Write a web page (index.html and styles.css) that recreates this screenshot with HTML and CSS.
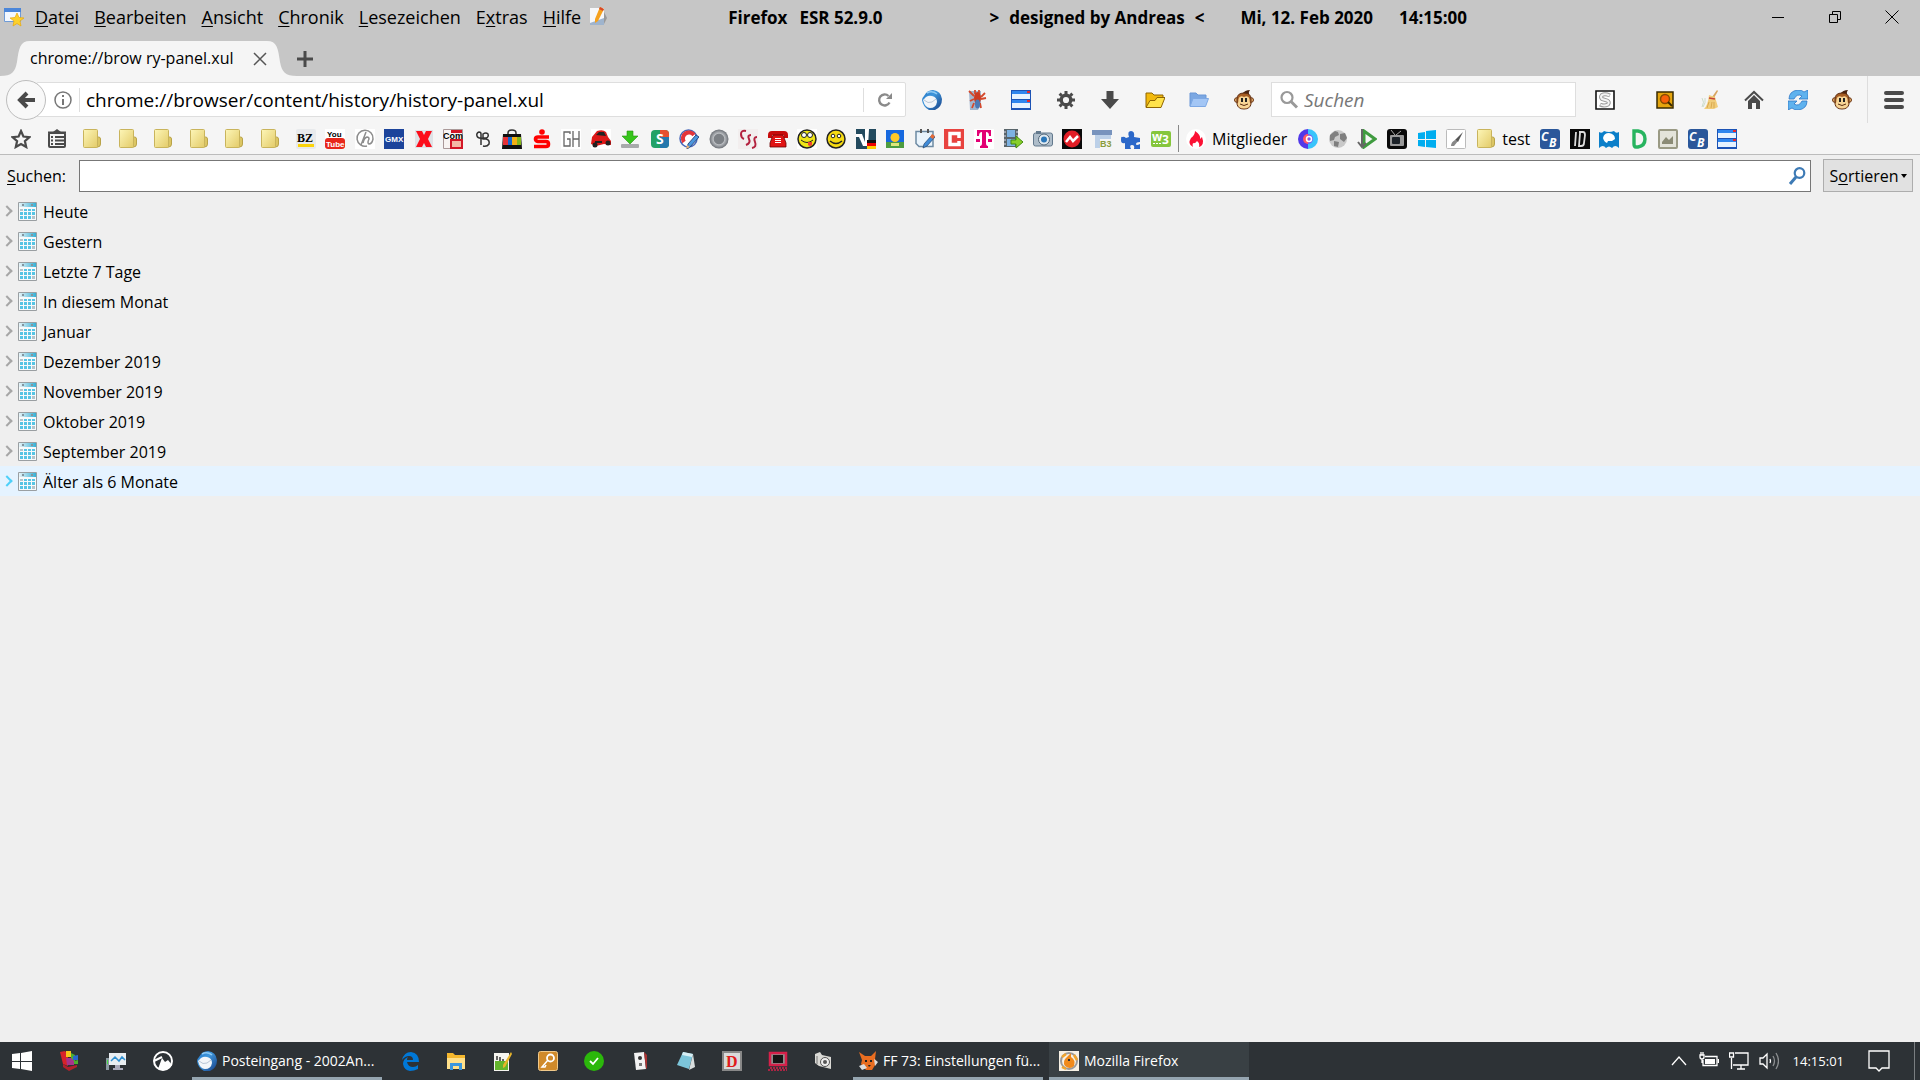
FILE: index.html
```html
<!DOCTYPE html>
<html lang="de">
<head>
    <meta charset="UTF-8">
    <title>Mozilla Firefox</title>
    <link rel="stylesheet" href="styles.css">
</head>
<body>
<svg class="defs">
    <defs>
        <linearGradient id="gFolder" x1="0" y1="0" x2="1" y2="1">
            <stop offset="0" stop-color="#fdf6b8"/>
            <stop offset="1" stop-color="#e3cb68"/>
        </linearGradient>
        <linearGradient id="gCal" x1="0" y1="0" x2="1" y2="0">
            <stop offset="0" stop-color="#e8f4f8"/>
            <stop offset="1" stop-color="#35b0d5"/>
        </linearGradient>
        <linearGradient id="gBird" x1="0" y1="0" x2="1" y2="1">
            <stop offset="0" stop-color="#1f6fc0"/>
            <stop offset=".4" stop-color="#3f97dc"/>
            <stop offset="1" stop-color="#173f86"/>
        </linearGradient>
        <radialGradient id="gGrey">
            <stop offset="0" stop-color="#7c8085"/>
            <stop offset=".5" stop-color="#7c8085"/>
            <stop offset=".6" stop-color="#b9bcc0"/>
            <stop offset="1" stop-color="#6b6f75"/>
        </radialGradient>
        <symbol id="folder" viewBox="0 0 20 20">
            <path d="M14 8h2.500q2 0 2 2v5q0 3-3 3h-3z" fill="#dcc664" stroke="#b9a349"/>
            <rect x="1.500" y=".5" width="14" height="18" rx="1" fill="url(#gFolder)" stroke="#c9b45c"/>
        </symbol>
        <symbol id="window" viewBox="0 0 20 20">
            <path d="M0 0h20v20H0z" fill="#1c53b5"/>
            <path d="M1 1h18v3H1zM1 10h18v3H1z" fill="#2f86ee"/>
            <path d="M1 4h18v5H1zM1 13h18v5H1z" fill="#e6f2ff"/>
            <path d="M16 1h3v2h-3zM16 10h3v2h-3z" fill="#e8262a"/>
        </symbol>
        <symbol id="cb" viewBox="0 0 20 20">
            <rect width="20" height="20" rx="3" fill="#2b579a"/>
            <text x="1" y="12" class="t-cb">C</text>
            <text x="9" y="18" class="t-cb">B</text>
        </symbol>
        <symbol id="monkey" viewBox="0 0 20 20">
            <path d="M8 4Q11 0 16 0q-2 2-1 5z" fill="#4a2410"/>
            <circle cx="2.800" cy="10" r="2.300" fill="#e5b06e" stroke="#6b3512"/>
            <circle cx="17.200" cy="10" r="2.300" fill="#e5b06e" stroke="#6b3512"/>
            <path d="M3 9Q3 3 10 3t7 6v5q-1 5-7 5t-7-5z" fill="#a75d22" stroke="#5d2d10"/>
            <path d="M4.500 9q1-4 5.500-2 4.500-2 5.500 2 0 3 1 5-1 4.500-6.500 4.500T3.500 14q1-2 1-5z" fill="#f7d596"/>
            <path d="M7 8h2v4H7zM11 8h2v4h-2z" fill="#222"/>
            <path d="M6 14q4 3 8 0" fill="none" stroke="#5d2d10"/>
        </symbol>
        <symbol id="calendar" viewBox="0 0 19 19">
            <path d="M.5.500h18v18H.5z" fill="#f7fafb" stroke="#9a9fa2"/>
            <path d="M1 1h17v4H1z" fill="url(#gCal)"/>
            <path d="M4 2h2v2H4zM13 2h2v2h-2z" fill="#84949c"/>
            <path d="M6 7h3v2H6zM10 7h3v2h-3zM14 7h3v2h-3zM2 10h3v3H2zM6 10h3v3H6zM10 10h3v3h-3zM14 10h3v3h-3zM2 14h3v3H2zM6 14h3v3H6zM10 14h3v3h-3z" fill="#56c4e4"/>
            <path d="M2 7h3v2H2zM14 14h3v3h-3z" fill="#b4c3ca"/>
        </symbol>
        <symbol id="thunderbird" viewBox="0 0 20 20">
            <path d="M2 6Q5 0 11 0q8 1 9 9 0 8-7 11H7Q1 17 0 10q0-2 2-4z" fill="url(#gBird)"/>
            <path d="M1 10l3-3q3-2 6-1 5 1 5 6-1 6-7 6-5 0-7-8z" fill="#f2f5f9"/>
            <path d="M2 10q4 4 8 2l4-3" fill="none" stroke="#b9c6d6"/>
            <path d="M5 3q5-3 10 1" fill="none" stroke="#8fcaf4" stroke-width="1.500"/>
        </symbol>
    </defs>
</svg>

<header class="titlebar">
    <svg class="app-icon" viewBox="0 0 20 20">
        <path d="M.5 1.500h16v13H.5z" fill="#f3f8ff" stroke="#6f9bd6"/>
        <path d="M0 1h17v4H0z" fill="#4b86d9"/>
        <path d="M13 6l2 4.500 5 .5-4 3 1 5-4-2.500L9 19l1-5-4-3 5-.5z" fill="#fcd12c" stroke="#e8a80c" stroke-width=".7"/>
    </svg>
    <nav class="menu">
        <button><u>D</u>atei</button>
        <button><u>B</u>earbeiten</button>
        <button><u>A</u>nsicht</button>
        <button><u>C</u>hronik</button>
        <button><u>L</u>esezeichen</button>
        <button>E<u>x</u>tras</button>
        <button><u>H</u>ilfe</button>
    </nav>
    <svg class="icon" viewBox="0 0 20 20">
        <path d="M1 1h14v17H1z" fill="#f7f8fa"/>
        <path d="M1 16l14-5v7H1z" fill="#9fb4cd"/>
        <path d="M15 5l3 6-3 6z" fill="#999"/>
        <path d="M11 0l4 2-6 12-3 2v-4z" fill="#f5a11d"/>
        <path d="M11 0l4 2-1 2-4-2z" fill="#d8482a"/>
    </svg>
    <div class="title">
        <span>Firefox</span>
        <span class="version">ESR 52.9.0</span>
        <span class="design"><span>&gt;</span><span>designed by Andreas</span><span>&lt;</span></span>
        <span class="date">Mi, 12. Feb 2020</span>
        <span class="time">14:15:00</span>
    </div>
    <div class="controls">
        <button aria-label="Minimieren"><svg viewBox="0 0 14 14"><path d="M1 7.500h12"/></svg></button>
        <button aria-label="Verkleinern"><svg viewBox="0 0 14 14"><path d="M1.500 4.500h8v8h-8zM4.500 4.500v-3h8v8h-3"/></svg></button>
        <button aria-label="Schließen"><svg viewBox="0 0 14 14"><path d="M.5.500l13 13M13.500.500l-13 13"/></svg></button>
    </div>
</header>

<div class="tabs">
    <div class="tab">
        <svg class="tab-edge" viewBox="0 0 30 35"><path d="M0 35C12 35 15 31 17 21 19 7 20 0 30 0V35z"/></svg>
        <span class="tab-label">chrome://brow ry-panel.xul</span>
        <button class="tab-close" aria-label="Tab schließen"><svg viewBox="0 0 14 14"><path d="M1 1l12 12M13 1L1 13"/></svg></button>
        <svg class="tab-edge" viewBox="0 0 30 35"><path d="M30 35C18 35 15 31 13 21 11 7 10 0 0 0V35z"/></svg>
    </div>
    <button class="new-tab" aria-label="Neuer Tab"><svg viewBox="0 0 16 16"><path d="M8 0v16M0 8h16"/></svg></button>
</div>

<div class="navbar">
    <button class="back" aria-label="Zurück"><svg viewBox="0 0 20 20"><path d="M19 10H5M11 3l-7 7 7 7" fill="none" stroke="#4a4a4a" stroke-width="4"/></svg></button>
    <div class="urlbar">
        <svg class="info" viewBox="0 0 20 20"><circle cx="10" cy="10" r="8" fill="none" stroke="#777" stroke-width="1.500"/><path d="M9 5h2v2H9zM9 9h2v6H9z" fill="#777"/></svg>
        <input type="text" aria-label="Adresse" value="chrome://browser/content/history/history-panel.xul">
        <button class="reload" aria-label="Neu laden"><svg viewBox="0 0 20 20"><path d="M14.500 12.500A5.500 5.500 0 1 1 13.500 6" fill="none" stroke="#8a8a8a" stroke-width="2.400"/><path d="M17 3v6h-6z" fill="#8a8a8a"/></svg></button>
    </div>
    <div class="tools">
        <button aria-label="Thunderbird"><svg class="icon"><use href="#thunderbird"/></svg></button>
        <button aria-label="Bug"><svg class="icon" viewBox="0 0 20 20">
            <path d="M2 1h12v13l-3 6H3z" fill="#a3b6cf"/>
            <path d="M2 1l5 5M18 3l-4 4M3 11l4-2M19 8l-5 1M5 18l2-5M14 18l-1-5M8 0v4M12 0v4" stroke="#d4492c" stroke-width="1.800"/>
            <ellipse cx="10.500" cy="8" rx="3.500" ry="6" fill="#cc3a22"/>
            <ellipse cx="10.500" cy="14" rx="2.500" ry="4.500" fill="#4d78b4"/>
        </svg></button>
        <button aria-label="Fenster"><svg class="icon"><use href="#window"/></svg></button>
        <button aria-label="Einstellungen"><svg class="icon" viewBox="0 0 20 20">
            <circle cx="10" cy="10" r="4.800" fill="none" stroke="#4a4a4a" stroke-width="3.400"/>
            <path d="M10 1v3M10 16v3M1 10h3M16 10h3M3.600 3.600l2.200 2.200M14.200 14.200l2.200 2.200M3.600 16.400l2.200-2.200M14.200 5.800l2.200-2.200" stroke="#4a4a4a" stroke-width="3"/>
        </svg></button>
        <button aria-label="Downloads"><svg class="icon" viewBox="0 0 20 20"><path d="M6.500 1h7v8H19l-9 10L1 9h5.500z" fill="#4a4a4a"/></svg></button>
        <button aria-label="Ordner öffnen"><svg class="icon" viewBox="0 0 20 20">
            <path d="M1 17V3h6l2 2h9v3" fill="#f2b90c" stroke="#8f6500"/>
            <path d="M1 17.500l4-7h5l2-3h8l-4 10z" fill="#ffe24a" stroke="#8f6500"/>
        </svg></button>
        <button aria-label="Profilordner"><svg class="icon" viewBox="0 0 20 20">
            <path d="M1 16V3h6l2 2h8v4" fill="#7ba7e2" stroke="#6a97d6"/>
            <path d="M1 16.500l3-8h15.500l-3 8z" fill="#a3c6f5" stroke="#7da8e4"/>
        </svg></button>
        <button aria-label="Greasemonkey"><svg class="icon"><use href="#monkey"/></svg></button>
    </div>
    <div class="searchbar">
        <svg class="icon" viewBox="0 0 20 20"><circle cx="8" cy="7.500" r="5.500" fill="none" stroke="#999" stroke-width="2.200"/><path d="M12 11.500l6 6" stroke="#999" stroke-width="3"/></svg>
        <input type="text" placeholder="Suchen" aria-label="Suchen">
    </div>
    <button class="stylish" aria-label="Stylish"><svg class="icon" viewBox="0 0 20 20">
        <path d="M1 1h18v18H1z" fill="#fff" stroke="#111" stroke-width="1.600"/>
        <path d="M15 5.500Q10 3.500 7 5q-2 2 0 4l5 1.500q3 1.500 1 4-4 2-8 0" fill="none" stroke="#999" stroke-width="4"/>
        <path d="M14.500 5.500Q10 3.500 7 5q-2 2 0 4l5 1.500q3 1.500 1 4-4 2-7.500 0" fill="none" stroke="#f4f4f4" stroke-width="2"/>
    </svg></button>
    <div class="tools-right">
        <button aria-label="Lupe"><svg class="icon" viewBox="0 0 20 20"><path d="M2 2h16v16H2z" fill="#e5a50d" stroke="#3a2b00" stroke-width="1.500"/><circle cx="10" cy="9" r="4.500" fill="#f9600a" stroke="#8a4b00" stroke-width="1.500"/><path d="M13 12l4 4" stroke="#3a2b00" stroke-width="2"/></svg></button>
        <button aria-label="Aufräumen"><svg class="icon" viewBox="0 0 20 20"><path d="M18 0l1 1-4 7-2-1z" fill="#d8a560"/><path d="M10 5l6 2 3 10-4 2H5q4-4 5-14z" fill="#f1cd7b"/><path d="M10 8l6 1" stroke="#c84536" stroke-width="1.500"/><path d="M10 12l-2 6M13 12l-1 6M15 12v6" stroke="#d9a94f"/><path d="M3 8q3 4 0 9M6 8q1 5-2 9" fill="none" stroke="#ccdccc"/></svg></button>
        <button aria-label="Startseite"><svg class="icon" viewBox="0 0 20 20"><path d="M1 10.500L10 2l9 8.500" fill="none" stroke="#4a4a4a" stroke-width="2"/><path d="M4 11l6-6 6 6v8h-4v-6H8v6H4z" fill="#4a4a4a"/></svg></button>
        <button aria-label="Neu starten"><svg class="icon" viewBox="0 0 20 20"><path d="M1 9Q1 1 10 0q4 0 6 2l4-2v9h-9l3-3q-5-3-8 3z" fill="#5fb2ee" stroke="#2b76c6" stroke-width=".8"/><path d="M19 11q0 8-9 9-4 0-6-2l-4 2v-9h9l-3 3q5 3 8-3z" fill="#5fb2ee" stroke="#2b76c6" stroke-width=".8"/></svg></button>
        <button aria-label="Scriptish"><svg class="icon"><use href="#monkey"/></svg></button>
    </div>
    <button class="hamburger" aria-label="Menü"><svg class="icon" viewBox="0 0 20 20"><path d="M2 3h16M2 10h16M2 17h16" stroke="#4a4a4a" stroke-width="4" stroke-linecap="round"/></svg></button>
</div>

<nav class="bookmarks">
    <div class="folders">
        <a href="#"><svg class="icon" viewBox="0 0 20 20"><path d="M10 2l2.400 5.500 6 .6-4.500 4 1.300 5.900L10 15l-5.200 3 1.300-5.900-4.500-4 6-.6z" fill="none" stroke="#4a4a4a" stroke-width="2.200"/></svg></a>
        <a href="#"><svg class="icon" viewBox="0 0 20 20"><path d="M6 3l4-3 4 3z" fill="#4a4a4a"/><rect x="2" y="4" width="16" height="14" rx="1" fill="none" stroke="#4a4a4a" stroke-width="2"/><path d="M4 8h2M8 8h9M4 11.500h2M8 11.500h9M4 15h2M8 15h9M1 3.500h18" stroke="#4a4a4a" stroke-width="1.800"/></svg></a>
        <a href="#"><svg class="icon"><use href="#folder"/></svg></a>
        <a href="#"><svg class="icon"><use href="#folder"/></svg></a>
        <a href="#"><svg class="icon"><use href="#folder"/></svg></a>
        <a href="#"><svg class="icon"><use href="#folder"/></svg></a>
        <a href="#"><svg class="icon"><use href="#folder"/></svg></a>
        <a href="#"><svg class="icon"><use href="#folder"/></svg></a>
    </div>
    <div class="sites">
        <a href="#"><svg class="icon" viewBox="0 0 20 20"><rect width="20" height="20" rx="2" fill="#e8eaec"/><text x="1" y="13" class="t-bz">BZ</text><path d="M2 15h16v3H2z" fill="#fbd40b"/></svg></a>
        <a href="#"><svg class="icon" viewBox="0 0 20 20"><path d="M0 0h20v20H0z" fill="#fff"/><text x="2" y="8" class="t-yt">You</text><rect y="9" width="20" height="11" rx="3" fill="#e8271b"/><text x="1" y="18" class="t-yt white">Tube</text></svg></a>
        <a href="#"><svg class="icon" viewBox="0 0 20 20"><path d="M0 0h20v20H0z" fill="#fff"/><path d="M12 17A8 8 0 1 1 18 10q-1 5-4 5-2-1 0-5 0-2-2-2-3 1-4 6M11 3L6 16" fill="none" stroke="#8d8d8d" stroke-width="1.500"/></svg></a>
        <a href="#"><svg class="icon" viewBox="0 0 20 20"><path d="M0 0h20v20H0z" fill="#1c449b"/><text x="1" y="13" class="t-gmx">GMX</text></svg></a>
        <a href="#"><svg class="icon" viewBox="0 0 20 20"><path d="M1 1h18v18H1z" fill="#dfe2e6"/><path d="M2 2h6l2 4 2-4h6l-4 8 4 8h-6l-2-4-2 4H2l4-8z" fill="#fc0d1b"/></svg></a>
        <a href="#"><svg class="icon" viewBox="0 0 20 20"><path d="M.5.500h19v19H.5z" fill="#f8f4f2" stroke="#a99"/><path d="M8 1h11v3H8z" fill="#d31626"/><path d="M8 11h11v8H8z" fill="#f4b9a5" stroke="#d31626" stroke-width="2"/><text x="0" y="10" class="t-com">Com</text></svg></a>
        <a href="#"><svg class="icon" viewBox="0 0 20 20"><path d="M8 16V5q0-2-2-2-3 1-2 4 1 3 6 2h3q3-1 2-4-2-2-5 0v5h3q4 1 3 5-2 3-6 2" fill="none" stroke="#333" stroke-width="1.500"/></svg></a>
        <a href="#"><svg class="icon" viewBox="0 0 20 20"><path d="M6 6V4q0-3 4-3t4 3v2" fill="none" stroke="#333" stroke-width="1.500"/><path d="M1 5h18l1 15H0z" fill="#111"/><path d="M1 8h5v8H1z" fill="#e43137"/><path d="M6 8h4v8H6z" fill="#1466d1"/><path d="M10 8h5v8h-5z" fill="#f4af13"/><path d="M15 8h4v8h-4z" fill="#84b71a"/></svg></a>
        <a href="#"><svg class="icon" viewBox="0 0 20 20"><circle cx="10" cy="3" r="2.800" fill="#f00"/><path d="M17 8H6q-2.500 0-2.500 2T6 12.500h8q2.500 0 2.500 2.500T14 17.500H2" fill="none" stroke="#f00" stroke-width="3.600"/></svg></a>
        <a href="#"><svg class="icon" viewBox="0 0 20 20"><path d="M0 0h20v20H0z" fill="#fff"/><path d="M9 5V3H3v14h6v-7H6M12 2v16M18 2v16M12 10h6" fill="none" stroke="#666" stroke-width="1.300"/></svg></a>
        <a href="#"><svg class="icon" viewBox="0 0 20 20"><path d="M0 0h20v20H0z" fill="#fff"/><path d="M1 8l5-6q6-2 9 1l2 5 3 4v4l-7-1-8 2-5-2z" fill="#dd1818"/><path d="M5 6l3-3h5l2 4zM4 12h7v2H4z" fill="#222"/><circle cx="4" cy="16" r="2.500" fill="#222"/><circle cx="17" cy="14" r="2.500" fill="#222"/></svg></a>
        <a href="#"><svg class="icon" viewBox="0 0 20 20"><rect x="1" y="15" width="18" height="4" rx="1" fill="#a8aaab"/><path d="M7 2h6v5h5l-8 8-8-8h5z" fill="#37c51c" stroke="#259012" stroke-width=".6"/></svg></a>
        <a href="#"><svg class="icon" viewBox="0 0 20 20"><rect x="1" y="1" width="18" height="18" rx="4" fill="#21a267"/><path d="M10 1h5q4 0 4 4v3h-9z" fill="#e5502f"/><path d="M19 8v7q0 4-4 4h-5V8z" fill="#2478ad"/><text x="6" y="15" class="t-s">S</text></svg></a>
        <a href="#"><svg class="icon" viewBox="0 0 20 20"><circle cx="9.500" cy="9.500" r="8.500" fill="#fff" stroke="#4666b8" stroke-width="1.500"/><path d="M5 13a6 6 0 1 1 10-7" fill="none" stroke="#e3353b" stroke-width="4"/><path d="M8 20l1-5 8-9 3 2-9 10z" fill="#4b97df" stroke="#294d84"/><path d="M7 20l1-4 3 2z" fill="#eab277"/></svg></a>
        <a href="#"><svg class="icon" viewBox="0 0 20 20"><circle cx="10" cy="10" r="9.500" fill="url(#gGrey)"/></svg></a>
        <a href="#"><svg class="icon" viewBox="0 0 20 20"><path d="M0 0h20v20H0z" fill="#f2eeee"/><path d="M8 2Q3 1 3 5t3 5M13 6q-4 0-2 4t-3 6M19 8q-4 0-2 5t-3 6" fill="none" stroke="#b3213e" stroke-width="2"/></svg></a>
        <a href="#"><svg class="icon" viewBox="0 0 20 20"><path d="M0 6q0-4 4-4h12q4 0 4 4v3h-4V6H4v3H0z" fill="#c70c0c"/><path d="M5 6h10l3 8v4H2v-4z" fill="#e11414" stroke="#6b0000" stroke-width=".8"/><path d="M7 9h6v1H7zM7 11h6v1H7zM7 13h6v1H7z" fill="#fff"/></svg></a>
        <a href="#"><svg class="icon" viewBox="0 0 20 20"><path d="M0 0h20v20H0z" fill="#fff"/><circle cx="10" cy="10" r="9" fill="#f0e516" stroke="#222" stroke-width="1.500"/><circle cx="7" cy="6" r="2.500" fill="#fff" stroke="#222"/><circle cx="13" cy="6" r="2.500" fill="#fff" stroke="#222"/><path d="M4 11q6 5 12 0" fill="none" stroke="#222"/><path d="M11 13h4v3q-2 2-4 0z" fill="#e43"/></svg></a>
        <a href="#"><svg class="icon" viewBox="0 0 20 20"><circle cx="10" cy="10" r="9" fill="#f6db13" stroke="#222" stroke-width="1.500"/><circle cx="7" cy="7" r="1.800" fill="#fff" stroke="#222"/><circle cx="13" cy="7" r="1.800" fill="#fff" stroke="#222"/><path d="M4 12q6 5 12 0" fill="none" stroke="#222" stroke-width="1.500"/></svg></a>
        <a href="#"><svg class="icon" viewBox="0 0 20 20"><path d="M0 0h20v20H0z" fill="#234a5e"/><path d="M0 5h6l3 8V0h4l-1 17H7L3 8H0z" fill="#fff"/><path d="M11 11h9v3h-9z" fill="#111"/><path d="M11 14h9v3h-9z" fill="#e00"/><path d="M11 17h9v3h-9z" fill="#fc0"/></svg></a>
        <a href="#"><svg class="icon" viewBox="0 0 20 20"><path d="M1 1h18v18H1z" fill="#1769df"/><path d="M1 13h18v6H1z" fill="#4d9c40"/><circle cx="10" cy="8.500" r="4.500" fill="#ffc928"/><path d="M6 14h8v3H6z" fill="#dfe77b"/></svg></a>
        <a href="#"><svg class="icon" viewBox="0 0 20 20"><path d="M1 2.500h17v15H4l-3-3z" fill="#eaf4fc" stroke="#6d8aa3" stroke-width="1.500"/><path d="M5 0h2v4H5zM12 0h2v4h-2z" fill="#555"/><path d="M8 19l1-4 8-9 3 2-8 9z" fill="#3f8bd8" stroke="#24466f" stroke-width=".7"/><path d="M15 8l2-3 3 2-2 3z" fill="#e66b37"/></svg></a>
        <a href="#"><svg class="icon" viewBox="0 0 20 20"><path d="M0 0h20v20H0z" fill="#e8433f"/><path d="M15 9V4.500H6v11h9V12" fill="none" stroke="#fff" stroke-width="3.500"/></svg></a>
        <a href="#"><svg class="icon" viewBox="0 0 20 20"><path d="M0 0h20v20H0z" fill="#fff"/><path d="M3 1h14v6h-2q0-4-3-4v11q0 3 2 3v2H6v-2q2 0 2-3V3Q5 3 5 7H3zM2 10h4v3H2zM14 10h4v3h-4z" fill="#e20074"/></svg></a>
        <a href="#"><svg class="icon" viewBox="0 0 20 20"><path d="M1 0h14v18H1z" fill="#59656b"/><path d="M4 1h8v7H4zM4 10h8v7H4z" fill="#7db2e2"/><path d="M2 2v15M14 2v15" stroke="#dde" stroke-dasharray="2 2"/><path d="M8 11h5V7l7 6-7 6v-4H8z" fill="#88cf2a" stroke="#448b11"/></svg></a>
        <a href="#"><svg class="icon" viewBox="0 0 20 20"><rect x=".5" y="4" width="19" height="13" rx="2" fill="#aebdca" stroke="#63798d"/><path d="M3 2h5v3H3z" fill="#63798d"/><circle cx="11" cy="10.500" r="5.500" fill="#dfe8ef" stroke="#526678"/><circle cx="11" cy="10.500" r="3" fill="#2a76b8"/></svg></a>
        <a href="#"><svg class="icon" viewBox="0 0 20 20"><path d="M0 0h20v20H0z" fill="#0a0a0a"/><circle cx="10" cy="10" r="8.500" fill="#e21e26"/><path d="M4 13l4-5 3 4 5-5" fill="none" stroke="#fff" stroke-width="2.500"/></svg></a>
        <a href="#"><svg class="icon" viewBox="0 0 20 20"><path d="M0 1h20v5H0z" fill="#7893bd"/><path d="M3 6h5v13H3zM8 6h11v4H8z" fill="#bcd0e8"/><text x="8" y="18" class="t-b3">B3</text></svg></a>
        <a href="#"><svg class="icon" viewBox="0 0 20 20"><path d="M1 8q2-1 4 1l3-1q-2-6 2-6t3 6l6 1v4q-4 0-4 2t4 0v5h-6q1-4-2-4t-1 4H4v-6q-4 1-4-3t1-3z" fill="#2c68c9"/></svg></a>
        <a href="#"><svg class="icon" viewBox="0 0 20 20"><rect y="2" width="20" height="16" rx="2" fill="#85c63c"/><text x="1" y="12" class="t-w3">w</text><text x="11" y="15" class="t-w3">3</text><path d="M2 14.500h8" stroke="#fff" stroke-dasharray="2 1"/></svg></a>
    </div>
    <span class="divider"></span>
    <a href="#" class="labelled"><svg class="icon" viewBox="0 0 20 20"><circle cx="10" cy="10" r="10" fill="#fff"/><path d="M9 2q6 4 5 8l2-2q3 8-3 10 1-4-2-6-2 3-4 2-1 2 0 4-6-3-2-9 4-3 4-7z" fill="#fb1134"/></svg>Mitglieder</a>
    <div class="sites-6">
        <a href="#"><svg class="icon" viewBox="0 0 20 20"><path d="M10 0a10 10 0 0 0 0 20z" fill="#5138e8"/><path d="M10 0a10 10 0 0 1 0 20z" fill="#39c4fb"/><path d="M10 5a5 5 0 0 0 0 10z" fill="#ff5969"/><path d="M10 5a5 5 0 0 1 0 10z" fill="#7b5cf0"/><circle cx="11" cy="10" r="2.500" fill="none" stroke="#fff" stroke-width="1.500"/></svg></a>
        <a href="#"><svg class="icon" viewBox="0 0 20 20"><circle cx="10" cy="10" r="9" fill="#c9c9c9"/><path d="M2 6l5-4 3 1 1 3-4 2-1 3-4 1zM12 5l5-1 2 5-3 4-4-3zM6 12l5 1-1 5-4-1z" fill="#7f7f7f"/></svg></a>
        <a href="#"><svg class="icon" viewBox="0 0 20 20"><path d="M7 2l11 8-11 8z" fill="none" stroke="#3f9b3f" stroke-width="3"/><path d="M5 0v17M1 13l4 5 4-4" fill="none" stroke="#666" stroke-width="2"/></svg></a>
        <a href="#"><svg class="icon" viewBox="0 0 20 20"><rect width="20" height="20" rx="3" fill="#0a0a0a"/><path d="M8 6L4 1M9 6l5-4" stroke="#aaa"/><rect x="3" y="6" width="14" height="11" rx="1" fill="#999"/><rect x="5" y="8" width="8" height="7" rx="1" fill="#1c2228"/></svg></a>
        <a href="#"><svg class="icon" viewBox="0 0 20 20"><path d="M1 4l7-1v7H1zM9 2l10-1v9H9zM1 11h7v7l-7-1zM9 11h10v8L9 18z" fill="#00adef"/></svg></a>
        <a href="#"><svg class="icon" viewBox="0 0 20 20"><rect x=".5" y=".5" width="19" height="19" rx="1" fill="#fff" stroke="#bbb"/><path d="M17 3l-5 10-3-2z" fill="#555"/><path d="M9 11l3 1-4 5H5q0-4 4-6z" fill="#888"/></svg></a>
    </div>
    <a href="#" class="labelled"><svg class="icon"><use href="#folder"/></svg>test</a>
    <div class="sites-7">
        <a href="#"><svg class="icon"><use href="#cb"/></svg></a>
        <a href="#"><svg class="icon" viewBox="0 0 20 20"><path d="M0 0h20v20H0z" fill="#0a0a0a"/><path d="M6 3L5 17M9 3h4q2 0 2 3l-1 8q0 3-3 3H9l1-13" fill="none" stroke="#ddd" stroke-width="1.800"/></svg></a>
        <a href="#"><svg class="icon" viewBox="0 0 20 20"><path d="M0 3q3 2 5-1 5 2 10 0 2 3 5 1v16q-4-4-7 0-3-3-6 0-3-4-7 0z" fill="#0c7fc9"/><path d="M4 9q1-5 6-5 6 1 6 6l-3 2H9l-1 2q-3-1-4-5z" fill="#fff"/></svg></a>
        <a href="#"><svg class="icon" viewBox="0 0 20 20"><path d="M5 2h4q7 1 7 8t-7 8H7q-2 0-2-3z" fill="none" stroke="#27b45f" stroke-width="3.400"/></svg></a>
        <a href="#"><svg class="icon" viewBox="0 0 20 20"><rect x="1" y="1" width="18" height="18" rx="1" fill="#e4e4da" stroke="#9a9a84" stroke-width="2"/><path d="M4 15v-2l4-5 3 3 4-4v8z" fill="#8b8b75"/></svg></a>
        <a href="#"><svg class="icon"><use href="#cb"/></svg></a>
        <a href="#"><svg class="icon"><use href="#window"/></svg></a>
    </div>
</nav>

<main class="history">
    <div class="history-search">
        <label for="search"><u>S</u>uchen:</label>
        <div class="field">
            <input type="text" id="search">
            <svg class="icon" viewBox="0 0 20 20"><circle cx="12.500" cy="7" r="4.800" fill="#fff" stroke="#3d7ab5" stroke-width="2.200"/><path d="M9 11l-6 7" stroke="#3d7ab5" stroke-width="3"/></svg>
        </div>
        <button class="sort"><span>S<u>o</u>rtieren</span><span class="arrow"></span></button>
    </div>
    <ul class="tree">
        <li><span class="twisty"></span><svg class="cal"><use href="#calendar"/></svg><span>Heute</span></li>
        <li><span class="twisty"></span><svg class="cal"><use href="#calendar"/></svg><span>Gestern</span></li>
        <li><span class="twisty"></span><svg class="cal"><use href="#calendar"/></svg><span>Letzte 7 Tage</span></li>
        <li><span class="twisty"></span><svg class="cal"><use href="#calendar"/></svg><span>In diesem Monat</span></li>
        <li><span class="twisty"></span><svg class="cal"><use href="#calendar"/></svg><span>Januar</span></li>
        <li><span class="twisty"></span><svg class="cal"><use href="#calendar"/></svg><span>Dezember 2019</span></li>
        <li><span class="twisty"></span><svg class="cal"><use href="#calendar"/></svg><span>November 2019</span></li>
        <li><span class="twisty"></span><svg class="cal"><use href="#calendar"/></svg><span>Oktober 2019</span></li>
        <li><span class="twisty"></span><svg class="cal"><use href="#calendar"/></svg><span>September 2019</span></li>
        <li class="hover"><span class="twisty"></span><svg class="cal"><use href="#calendar"/></svg><span>Älter als 6 Monate</span></li>
    </ul>
</main>

<footer class="taskbar">
    <div class="launch launch-left">
        <button aria-label="Start"><svg class="icon" viewBox="0 0 20 20"><path d="M0 3l8-1v8H0zM9 2l11-2v10H9zM0 11h8v7l-8-1zM9 11h11v9L9 18z" fill="#fff"/></svg></button>
        <button aria-label="Programme"><svg class="icon" viewBox="0 0 20 20"><path d="M1 1l5-1 3 3v12l-5-2z" fill="#d8232a"/><path d="M7 0h5v6H7z" fill="#f6c51b"/><path d="M12 2l4 2v6h-4z" fill="#4caf2e"/><path d="M7 7h5l3 3v4H8z" fill="#a7348c"/><path d="M14 5l5-1v5h-5z" fill="#2867ce"/><path d="M15 10l4-1v4h-4z" fill="#4caf2e"/><path d="M4 13l5 3 9-2v2l-8 4-6-4z" fill="#b3202c"/></svg></button>
        <button aria-label="Monitor"><svg class="icon" viewBox="0 0 20 20"><path d="M0 7h3v12H0z" fill="#8a9aa2"/><path d="M1 9h1v4H1z" fill="#4d4"/><path d="M3 2h17v12H3z" fill="#e9eef2"/><path d="M5 10l4-4 4 4 3-4 3 3" fill="none" stroke="#2e8fd1" stroke-width="1.500"/><path d="M9 14h5v3h3v2H7v-2h2z" fill="#aab"/></svg></button>
        <button aria-label="Dashboard"><svg class="icon" viewBox="0 0 20 20"><circle cx="10" cy="10" r="9" fill="none" stroke="#fff" stroke-width="2"/><path d="M5 18l4-11 3 4 3-2 4 5q-6 8-14 4z" fill="#fff"/><path d="M1 10l8-4" stroke="#fff" stroke-width="2"/></svg></button>
    </div>
    <button class="task"><svg class="icon"><use href="#thunderbird"/></svg><span>Posteingang - 2002An...</span></button>
    <div class="launch launch-mid">
        <button aria-label="Edge"><svg class="icon" viewBox="0 0 20 20"><path d="M2 9Q4 1 11 1q8 1 8 10H7q1 5 6 5 3 0 5-2v4q-4 2-8 2-6-1-7-7 0-5 5-7-1 1-1 3h6q0-4-4-4-4 0-7 4z" fill="#0078d7"/></svg></button>
        <button aria-label="Explorer"><svg class="icon" viewBox="0 0 20 20"><path d="M1 2h6l2 2h10v14H1z" fill="#f5b82e"/><path d="M1 7h18v11H1z" fill="#ffe08a"/><path d="M4 19v-7h12v7h-3v-4H7v4z" fill="#3a96dd"/></svg></button>
        <button aria-label="Editor"><svg class="icon" viewBox="0 0 20 20"><path d="M2 2h15v18H2z" fill="#f5f5f0"/><path d="M3 10h13v9H3z" fill="#63b52c"/><path d="M5 5v4M8 6v4M11 8v2" stroke="#333" stroke-width="1.500"/><path d="M19 1l1 2-7 13-2 1v-3z" fill="#e8b52b"/></svg></button>
        <button aria-label="KeePass"><svg class="icon" viewBox="0 0 20 20"><rect x=".5" y=".5" width="19" height="19" rx="2" fill="#d08a2a" stroke="#f0c98a"/><circle cx="12.500" cy="7" r="3.500" fill="none" stroke="#fff" stroke-width="1.800"/><path d="M10 9l-6 7h3l1-2" fill="none" stroke="#fff" stroke-width="1.500"/></svg></button>
        <button aria-label="Status"><svg class="icon" viewBox="0 0 20 20"><circle cx="10" cy="10" r="10" fill="#2bb80b"/><path d="M6 10l3 3 5-6" fill="none" stroke="#fff" stroke-width="1.800"/></svg></button>
        <button aria-label="Karten"><svg class="icon" viewBox="0 0 20 20"><path d="M4 2l10-1 2 17-10 1z" fill="#f3f3f3"/><path d="M14 1l2 17 1-1V4z" fill="#a33"/><circle cx="10" cy="7" r="2" fill="#333"/><path d="M9 12h3v3H9z" fill="#777"/></svg></button>
        <button aria-label="Notizen"><svg class="icon" viewBox="0 0 20 20"><path d="M7 1l10 2-4 15L1 14z" fill="#7cc5da"/><path d="M7 1l10 2-1 3L6 4z" fill="#d7eef4"/><path d="M17 3l2 13-6 3z" fill="#d9dede"/></svg></button>
        <button aria-label="Wörterbuch"><svg class="icon" viewBox="0 0 20 20"><path d="M1 1h18v18H1z" fill="#dadada" stroke="#888" stroke-width="2"/><text x="4" y="16" class="t-d">D</text></svg></button>
        <button aria-label="Rechner"><svg class="icon" viewBox="0 0 20 20"><path d="M2 2h16v12H2z" fill="#8c8c8c" stroke="#d6204a" stroke-width="2.500"/><path d="M5 4h10v8H5z" fill="#141414"/><path d="M2 17h17M0 19h19" stroke="#d6204a" stroke-width="1.500" stroke-dasharray="2 1"/></svg></button>
        <button aria-label="Kamera"><svg class="icon" viewBox="0 0 20 20"><path d="M1 3l5-2 2 3 9 2v12L5 15l-4-3z" fill="#d9d9d5"/><circle cx="11" cy="11" r="4.500" fill="#eee" stroke="#555"/><circle cx="11" cy="11" r="2" fill="#555"/><path d="M3 5v8" stroke="#777"/></svg></button>
    </div>
    <button class="task"><svg class="icon" viewBox="0 0 20 20"><path d="M1 1l6 4h6l5-5-1 8 2 3-5 8H8l-5-6 1-4z" fill="#e96d20"/><path d="M1 15l5-2 3 4-5 2zM16 8l4 3-3 4z" fill="#ddd"/><path d="M7 9h2v2H7zM12 9h2v2h-2zM10 14h3l-2 2z" fill="#222"/></svg><span>FF 73: Einstellungen fü...</span></button>
    <button class="task current"><svg class="icon" viewBox="0 0 20 20"><path d="M0 0h20v20H0z" fill="#f7f1e5"/><circle cx="10" cy="10" r="8" fill="none" stroke="#9a9a9a" stroke-width="2"/><path d="M6 15q-3-5 2-9l4-4v4q5 3 3 9-4 4-9 0z" fill="#f08a1b"/><path d="M3 6l4-3M15 4l3 5M3 16l4 2" stroke="#f2a52c" stroke-width="2.500"/><path d="M9 8h2v2H9z" fill="#333"/></svg><span>Mozilla Firefox</span></button>
    <div class="tray">
        <svg class="icon" viewBox="0 0 20 20"><path d="M3 14l7-8 7 8"/></svg>
        <svg class="icon" viewBox="0 0 20 20"><path d="M6 5.500h12v9H4V9M19.500 8v4M1 4v2q0 2 2 2t2-2V4zM2 1v3M4 1v3M3 8v4"/><path d="M6 8h10v5H6z" fill="#fff" stroke="none"/></svg>
        <svg class="icon" viewBox="0 0 20 20"><path d="M6 2h13v12H4M2.500 7v11M.5 2h4v4h-4zM12 14v4M8 18h8"/></svg>
        <svg class="icon" viewBox="0 0 20 20"><path d="M1 7h3l4-4v14l-4-4H1zM11 8q1 2 0 4"/><path d="M14 5q3 5 0 10M17 2q5 8 0 16" opacity=".45"/></svg>
    </div>
    <span class="clock">14:15:01</span>
    <button class="notify" aria-label="Info-Center"><svg viewBox="0 0 22 22"><path d="M1 1h20v17h-7l-3 3-3-3H1z"/></svg></button>
    <span class="show-desktop"></span>
</footer>
</body>
</html>
```
FILE: styles.css
```css
*{
    margin: 0;
    padding: 0;
    box-sizing: border-box;
    list-style: none;
}
body{
    display: flex;
    flex-direction: column;
    min-height: 100vh;
    background-color: #efefef;
    color: #000;
    font-family: "Open Sans", "Noto Sans", sans-serif;
    font-size: 16px;
}
button{
    border: none;
    background: none;
    color: inherit;
    font: inherit;
}
a{
    color: inherit;
    text-decoration: none;
}
input{
    min-width: 0;
    border: none;
    outline: none;
    background: none;
    font: inherit;
}
svg{
    display: block;
    flex: none;
}
u{
    text-underline-offset: 2px;
}
.defs{
    position: absolute;
    width: 0;
    height: 0;
}
.icon{
    width: 20px;
    height: 20px;
}

/* Titelleiste */
.titlebar{
    display: flex;
    align-items: center;
    height: 34px;
    padding-left: 4px;
    background-color: #c6c6c6;
}
.app-icon{
    width: 20px;
    height: 20px;
    margin-right: 11px;
}
.menu{
    display: flex;
    gap: 15px;
    margin-right: 8px;
    font-size: 18px;
}
.title{
    display: flex;
    margin-left: 119px;
    font-size: 17px;
    font-weight: bold;
    white-space: nowrap;
}
.version{
    margin-left: 12px;
}
.design{
    display: flex;
    gap: 10px;
    margin-left: 107px;
}
.date{
    margin-left: 36px;
}
.time{
    margin-left: 26px;
}
.controls{
    display: flex;
    margin-left: auto;
}
.controls button{
    width: 57px;
    height: 34px;
}
.controls svg{
    width: 14px;
    height: 14px;
    margin: 0 auto;
    fill: none;
    stroke: #000;
}

/* Tabs */
.tabs{
    display: flex;
    align-items: center;
    height: 42px;
    padding-top: 7px;
    background-color: #c6c6c6;
}
.tab{
    display: flex;
    align-items: center;
}
.tab-edge{
    width: 30px;
    height: 35px;
    fill: #f5f5f5;
}
.tab-label,.tab-close{
    height: 35px;
    background-color: #f5f5f5;
    line-height: 35px;
}
.tab-label{
    width: 209px;
    white-space: nowrap;
}
.tab-close{
    width: 28px;
    padding-left: 14px;
}
.tab-close svg{
    width: 14px;
    height: 14px;
    stroke: #555;
    stroke-width: 1.5;
}
.new-tab svg{
    width: 16px;
    height: 16px;
    stroke: #4a4a4a;
    stroke-width: 3;
}

/* Navigationsleiste */
.navbar{
    display: flex;
    align-items: center;
    height: 47px;
    padding: 0 16px 0 6px;
    background-color: #f5f5f5;
}
.back{
    display: flex;
    align-items: center;
    justify-content: center;
    width: 40px;
    height: 40px;
    border: 1px solid #bdbdbd;
    border-radius: 50%;
    background-color: #f8f8f8;
    z-index: 1;
}
.back svg{
    width: 20px;
    height: 20px;
}
.urlbar{
    display: flex;
    flex: 1;
    align-items: center;
    height: 35px;
    margin-left: -10px;
    padding-left: 16px;
    border: 1px solid #dedede;
    border-radius: 2px;
    background-color: #fff;
}
.info{
    width: 20px;
    height: 20px;
}
.urlbar input{
    flex: 1;
    height: 24px;
    margin-left: 6px;
    padding-left: 6px;
    border-left: 1px solid #dedede;
    font-size: 19px;
}
.reload{
    display: flex;
    align-items: center;
    justify-content: center;
    width: 42px;
    height: 24px;
    border-left: 1px solid #dedede;
}
.reload svg{
    width: 20px;
    height: 20px;
}
.tools,.tools-right,.folders,.sites,.sites-6,.sites-7{
    display: flex;
    flex: none;
    align-items: center;
    justify-content: space-between;
}
.tools{
    width: 332px;
    margin: 0 17px 0 16px;
}
.searchbar{
    display: flex;
    flex: none;
    align-items: center;
    width: 305px;
    height: 35px;
    padding-left: 7px;
    border: 1px solid #dedede;
    background-color: #fff;
}
.searchbar input{
    flex: 1;
    padding-left: 5px;
    font-size: 19px;
    font-style: italic;
}
.searchbar input::placeholder{
    color: #777;
}
.stylish{
    margin-left: 19px;
}
.tools-right{
    width: 197px;
    margin-left: 40px;
}
.hamburger{
    height: 47px;
    margin-left: 15px;
    padding-left: 16px;
    border-left: 1px solid #ddd;
}

/* Lesezeichenleiste */
.bookmarks{
    display: flex;
    align-items: center;
    height: 32px;
    padding-left: 11px;
    border-bottom: 1px solid #bcbcbc;
    background-color: #f5f5f5;
}
.folders{
    width: 269px;
}
.sites{
    width: 875px;
    margin-left: 16px;
}
.divider{
    width: 1px;
    height: 27px;
    margin: 0 7px;
    background-color: #888;
}
.labelled{
    display: flex;
    align-items: center;
    gap: 6px;
}
.sites-6{
    width: 168px;
    margin: 0 10px 0 11px;
}
.sites-7{
    width: 197px;
    margin-left: 10px;
}
.t-cb{
    font: italic bold 12px "Open Sans", sans-serif;
    fill: #fff;
}
.t-bz{
    font: bold 12px "Liberation Serif", serif;
}
.t-yt{
    font: bold 8px "Liberation Sans", sans-serif;
}
.white{
    fill: #fff;
}
.t-gmx{
    font: bold 8px "Liberation Sans", sans-serif;
    fill: #fff;
}
.t-com{
    font: bold 9px "Liberation Sans", sans-serif;
}
.t-s{
    font: bold 14px "Open Sans", sans-serif;
    fill: #fff;
}
.t-b3{
    font: bold 9px "Liberation Sans", sans-serif;
    fill: #8a9c3c;
}
.t-w3{
    font: bold 12px "Open Sans", sans-serif;
    fill: #fff;
}
.t-d{
    font: bold 16px "Liberation Serif", serif;
    fill: #e01b1b;
}

/* Chronik */
.history{
    flex: 1;
}
.history-search{
    display: flex;
    align-items: center;
    padding: 4px 7px;
}
.history-search label{
    width: 72px;
}
.field{
    display: flex;
    flex: 1;
    align-items: center;
    height: 32px;
    margin-right: 12px;
    padding-right: 3px;
    border: 1px solid #777;
    background-color: #fff;
}
.field input{
    flex: 1;
    height: 30px;
    padding: 0 4px;
}
.sort{
    display: flex;
    align-items: center;
    justify-content: center;
    gap: 2px;
    width: 90px;
    height: 33px;
    border: 1px solid #adadad;
    background-color: #e1e1e1;
}
.arrow{
    border: 3px solid transparent;
    border-top: 4px solid #000;
    border-bottom: none;
}
.tree li{
    display: flex;
    align-items: center;
    height: 30px;
    padding-left: 3px;
    line-height: 26px;
}
.tree li span:last-child{
    padding-top: 2px;
}
.tree .hover{
    background-color: #e5f3ff;
}
.twisty{
    width: 8px;
    height: 8px;
    margin-right: 7px;
    border-top: 2px solid #a6a6a6;
    border-right: 2px solid #a6a6a6;
    transform: rotate(45deg);
}
.hover .twisty{
    border-color: #4ed0f9;
}
.cal{
    width: 19px;
    height: 19px;
    margin-right: 6px;
}

/* Taskleiste */
.taskbar{
    display: flex;
    align-items: center;
    height: 38px;
    background-color: #2d3236;
    color: #fff;
    font-size: 14px;
}
.launch{
    display: flex;
    flex: none;
    justify-content: space-between;
}
.launch-left{
    width: 161px;
    margin: 0 19px 0 12px;
}
.launch-mid{
    width: 434px;
    margin: 0 19px 0 18px;
}
.task{
    display: flex;
    align-items: center;
    gap: 5px;
    width: 190px;
    height: 38px;
    padding: 2px 0 0 5px;
    border-bottom: 3px solid #95a5b0;
    white-space: nowrap;
}
.current{
    width: 200px;
    margin-left: 6px;
    padding-left: 10px;
    background-color: #394044;
}
.tray{
    display: flex;
    gap: 10px;
    margin-left: auto;
}
.tray svg,.notify svg{
    fill: none;
    stroke: #fff;
    stroke-width: 1.3;
}
.clock{
    margin-left: 14px;
    font-size: 13px;
}
.notify{
    margin-left: 24px;
}
.notify svg{
    width: 22px;
    height: 22px;
}
.show-desktop{
    width: 6px;
    height: 38px;
    margin-left: 24px;
    border-left: 1px solid #7a7e81;
}
```
